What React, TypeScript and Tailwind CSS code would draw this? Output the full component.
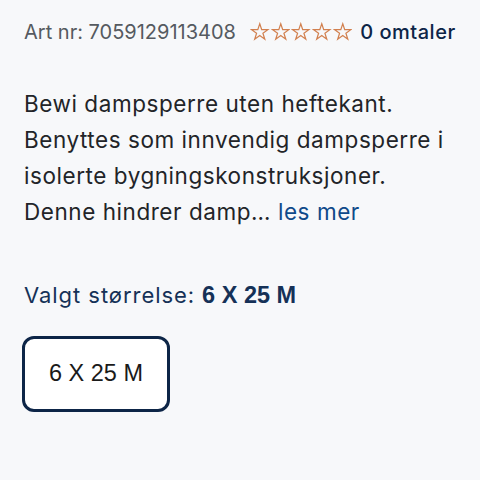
import React from "react";

const Star = () => (
  <svg width="19.5" height="19.5" viewBox="0 0 24 24" fill="none" stroke="#d2804f" strokeWidth="1.5" strokeLinejoin="miter">
    <path d="M12 2.2 L14.4 9.4 L22 9.4 L15.9 13.9 L18.2 21.2 L12 16.7 L5.8 21.2 L8.1 13.9 L2 9.4 L9.6 9.4 Z" />
  </svg>
);

export default function App() {
  return (
    <div className="min-h-[480px] w-[480px] bg-[#f7f8fa] px-6 pt-[18px]" style={{ fontFamily: "Inter, 'Open Sans', sans-serif" }}>
      <div className="flex items-center h-[28px] leading-[28px]">
        <span className="text-[20px] text-[#555a60]">Art nr: 7059129113408</span>
        <div className="flex ml-[14px] gap-[1.2px]">
          <Star /><Star /><Star /><Star /><Star />
        </div>
        <span className="ml-[8px] text-[20px] font-medium tracking-[0.5px] text-[#0d2547]">0 omtaler</span>
      </div>
      <p className="mt-[40px] text-[22.5px] leading-[36px] tracking-[0.55px] text-[#222428]">
        Bewi dampsperre uten heftekant. Benyttes som innvendig dampsperre i isolerte bygningskonstruksjoner. Denne hindrer damp…{" "}
        <span className="text-[#0f4a8a]">les mer</span>
      </p>
      <div className="mt-[50px] h-[30px] leading-[30px] flex items-baseline text-[#153157]">
        <span className="text-[22px] tracking-[0.95px]">Valgt størrelse:</span>
        <span className="ml-[7px] text-[23.5px] font-bold" style={{ fontFamily: "'Liberation Sans', Arial, sans-serif" }}>6 X 25 M</span>
      </div>
      <div
        className="mt-[26px] w-[148px] h-[76px] -ml-[2px] rounded-[12px] border-[3px] border-[#0d2547] bg-white flex items-center justify-center text-[23.5px] text-[#1a1a1a]"
        style={{ fontFamily: "'Liberation Sans', Arial, sans-serif" }}
      >
        6 X 25 M
      </div>
    </div>
  );
}
